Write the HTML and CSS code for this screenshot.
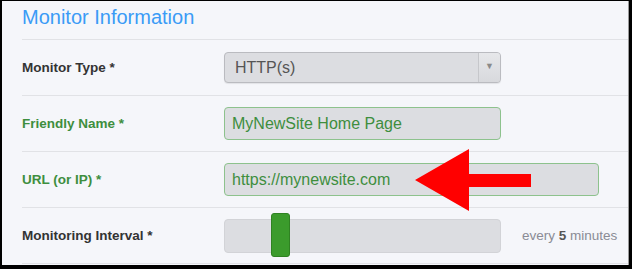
FILE: index.html
```html
<!DOCTYPE html>
<html lang="en">
<head>
  <meta charset="UTF-8" />
  <title>Monitor Information</title>
  <link rel="stylesheet" href="styles.css">
</head>
<body>
  <div class="panel">
    <h2 class="panel-title">Monitor Information</h2>

    <div class="form">
      <div class="row">
        <label class="label">Monitor Type *</label>
        <div class="select">
          <span class="select-value">HTTP(s)</span>
          <span class="select-caret">&#9660;</span>
        </div>
      </div>

      <div class="row valid">
        <label class="label">Friendly Name *</label>
        <input class="field" type="text" value="MyNewSite Home Page" readonly>
      </div>

      <div class="row valid">
        <label class="label">URL (or IP) *</label>
        <input class="field field-wide" type="text" value="https://mynewsite.com" readonly>
      </div>

      <div class="row">
        <label class="label">Monitoring Interval *</label>
        <div class="slider"><span class="slider-thumb"></span></div>
        <span class="hint">every <b>5</b> minutes</span>
      </div>
    </div>

    <!-- seta vermelha de destaque -->
    <svg class="arrow" width="116" height="62" viewBox="0 0 116 62">
      <polygon points="0,31 54,0 54,25 116,25 116,38 54,38 54,62" fill="#ff0000" />
    </svg>
  </div>
</body>
</html>
```

FILE: styles.css
```css
body {
  margin: 0;
  padding: 0;
  background: #000;
  font-family: "Liberation Sans", Arial, sans-serif;
}

.panel {
  position: relative;
  margin: 1px 3px 4px 2px;
  height: 264px;
  background: #f5f6fa;
  border-right: 1px solid #9a9a9a;
  box-sizing: border-box;
}

.panel-title {
  margin: 0;
  padding: 5px 0 10px 20px;
  font-size: 20px;
  line-height: 23px;
  font-weight: normal;
  color: #3a9bf6;
}

.form {
  padding-left: 20px;
}

.row {
  display: grid;
  grid-template-columns: 202px auto 1fr;
  align-items: center;
  height: 56px;
  border-top: 1px solid #e1e2e6;
  box-sizing: border-box;
}

.row:last-child {
  border-bottom: 1px solid #e1e2e6;
  height: 57px;
}

.label {
  font-size: 13.5px;
  font-weight: bold;
  color: #333;
}

.valid .label {
  color: #3e8e3e;
}

.select {
  display: flex;
  width: 277px;
  height: 31px;
  box-sizing: border-box;
  background: #dcdde1;
  border: 1px solid #babbc0;
  border-radius: 4px;
  box-shadow: 0 1px 1px rgba(0, 0, 0, 0.08);
}

.select-value {
  flex: 1;
  padding-left: 10px;
  font-size: 16px;
  line-height: 29px;
  color: #555;
}

.select-caret {
  width: 21px;
  border-left: 1px solid #c6c7cb;
  background: linear-gradient(#e6e7ea, #d8d9dd);
  border-radius: 0 3px 3px 0;
  font-size: 9px;
  line-height: 27px;
  text-align: center;
  color: #8a8a8a;
}

.field {
  width: 277px;
  height: 33px;
  box-sizing: border-box;
  margin: 0;
  padding: 0 7px;
  background: #dcdde1;
  border: 1px solid #8dc28d;
  border-radius: 4px;
  font-family: "Liberation Sans", Arial, sans-serif;
  font-size: 16px;
  color: #3e8e3e;
  outline: none;
}

.field-wide {
  width: 375px;
}

.slider {
  position: relative;
  width: 277px;
  height: 34px;
  box-sizing: border-box;
  background: #dcdde1;
  border: 1px solid #d2d3d7;
  border-radius: 4px;
}

.slider-thumb {
  position: absolute;
  left: 46px;
  top: -7px;
  width: 19px;
  height: 44px;
  box-sizing: border-box;
  background: #3b9b2c;
  border: 1px solid #2f8222;
  border-radius: 3px;
}

.hint {
  margin-left: 21px;
  font-size: 13.5px;
  color: #8a8b95;
}

.hint b {
  color: #555;
}

.arrow {
  position: absolute;
  left: 413px;
  top: 148px;
}
```
